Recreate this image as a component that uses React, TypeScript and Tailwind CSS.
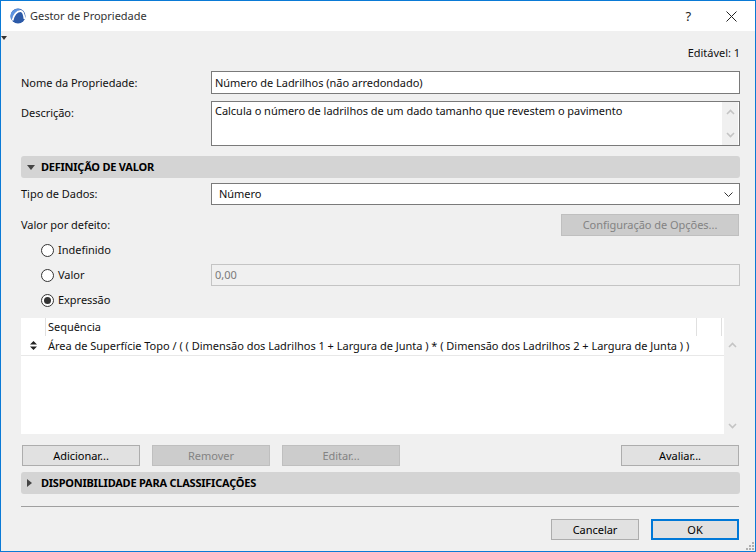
import React from 'react';

// Dialog "Gestor de Propriedade"

function Arrow({ up }: { up?: boolean }) {
  return (
    <svg width="9" height="6" viewBox="0 0 9 6" fill="none" stroke="#c4c4c4" strokeWidth="1.6">
      <path d={up ? 'M1 5l3.5-3.5L8 5' : 'M1 1l3.5 3.5L8 1'} />
    </svg>
  );
}

function Btn({ label, width, disabled, primary }: { label: string; width: string; disabled?: boolean; primary?: boolean }) {
  const look = disabled
    ? 'bg-[#cccccc] border-[#bfbfbf] text-[#838383]'
    : primary
    ? 'bg-[#e1e1e1] border-2 border-[#0078d7] text-black'
    : 'bg-[#e1e1e1] border-[#adadad] text-black';
  return <div className={`h-[21px] flex items-center justify-center border ${look} ${width}`}>{label}</div>;
}

function Radio({ label, checked, className }: { label: string; checked?: boolean; className?: string }) {
  return (
    <div className={`flex items-center gap-[4px] h-[14px] ${className ?? ''}`}>
      <div className="w-[13px] h-[13px] rounded-full border border-[#333333] bg-white flex items-center justify-center">
        {checked && <div className="w-[7px] h-[7px] rounded-full bg-[#333333]" />}
      </div>
      <span>{label}</span>
    </div>
  );
}

function Section({ label, open, className }: { label: string; open?: boolean; className?: string }) {
  return (
    <div className={`h-[22px] rounded-[3px] bg-[#d4d4d4] flex items-center font-bold text-black tracking-[-0.23px] ${className ?? ''}`}>
      <div className="w-[20px] flex justify-center">
        {open ? (
          <svg width="8" height="5" viewBox="0 0 8 5"><path d="M0 0h8L4 5z" fill="#444444" /></svg>
        ) : (
          <svg width="5" height="8" viewBox="0 0 5 8" className="ml-[-3px]"><path d="M0 0v8l5-4z" fill="#444444" /></svg>
        )}
      </div>
      <span>{label}</span>
    </div>
  );
}

export default function App() {
  return (
    <div className="relative w-[756px] h-[552px] flex flex-col border border-[#0a7ad6] bg-[#f0f0f0] text-[11px] leading-[14px] text-[#111111] tracking-[-0.03px] font-['Noto_Sans',sans-serif] overflow-hidden">
      {/* Title bar */}
      <div className="h-[30px] bg-white flex items-center shrink-0">
        <svg width="16" height="16" viewBox="0 0 16 16" className="ml-[9px]">
          <circle cx="8" cy="8" r="7.500" fill="#2c5aa8" />
          <path d="M.5 8a7.500 7.500 0 0 1 11-6.500C7 2 3 6 1.500 12 .8 11 .5 9.500.5 8z" fill="#5c93e0" />
          <path d="M2.500 12.500C3.500 7 7 3 10.500 3 13 3 14 6 14.500 11" fill="none" stroke="#ffffff" strokeWidth="1.800" />
        </svg>
        <span className="ml-[4px] text-[#333333]">Gestor de Propriedade</span>
        <span className="ml-auto text-[13px] text-[#222222] mr-[35px]">?</span>
        <svg width="11" height="11" viewBox="0 0 11 11" className="mr-[18px]" stroke="#222222" strokeWidth="1">
          <path d="M.5.5l10 10M10.500.5l-10 10" />
        </svg>
      </div>

      {/* Marker on the left edge */}
      <svg width="6" height="4" viewBox="0 0 6 4" className="absolute left-[0px] top-[35px]"><path d="M0 0h6L3 4z" fill="#333333" /></svg>

      <div className="flex-1 flex flex-col pl-[20px] pr-[15px]">
        <div className="h-[14px] mt-[15px] text-right">Editável: 1</div>

        {/* Name */}
        <div className="flex items-center mt-[11px]">
          <div className="w-[190px]">Nome da Propriedade:</div>
          <div className="flex-1 h-[23px] border border-[#7a7a7a] bg-white flex items-center px-[3px]">Número de Ladrilhos (não arredondado)</div>
        </div>

        {/* Description */}
        <div className="flex mt-[7px]">
          <div className="w-[190px] pt-[5px]">Descrição:</div>
          <div className="flex-1 h-[45px] border border-[#7a7a7a] bg-white flex pl-[3px]">
            <div className="flex-1 pt-[2px]">Calcula o número de ladrilhos de um dado tamanho que revestem o pavimento</div>
            <div className="w-[16px] mr-[1px] bg-[#f0f0f0] flex flex-col items-center justify-between py-[7px]">
              <Arrow up />
              <Arrow />
            </div>
          </div>
        </div>

        <Section label="DEFINIÇÃO DE VALOR" open className="mt-[10px]" />

        {/* Data type */}
        <div className="flex items-center mt-[5px]">
          <div className="w-[190px]">Tipo de Dados:</div>
          <div className="flex-1 h-[22px] border border-[#7a7a7a] bg-white flex items-center pl-[7px] pr-[6px] justify-between">
            <span>Número</span>
            <svg width="9" height="5" viewBox="0 0 9 5" fill="none" stroke="#333333"><path d="M.5.5l4 4 4-4" /></svg>
          </div>
        </div>

        {/* Default value */}
        <div className="flex items-center justify-between mt-[9px] pr-[1px]">
          <span>Valor por defeito:</span>
          <Btn label="Configuração de Opções..." width="w-[178px] h-[22px]" disabled />
        </div>

        <Radio label="Indefinido" className="ml-[20px] mt-[7px]" />
        <div className="flex items-center mt-[7px]">
          <Radio label="Valor" className="ml-[20px] w-[170px]" />
          <div className="flex-1 h-[22px] border border-[#c4c4c4] bg-[#f0f0f0] text-[#7a7a7a] flex items-center px-[3px]">0,00</div>
        </div>
        <Radio label="Expressão" checked className="ml-[20px] mt-[7px]" />

        {/* Sequence table */}
        <div className="flex mt-[11px] h-[116px]">
          <div className="w-[703px] bg-white flex flex-col">
            <div className="h-[18px] flex shrink-0">
              <div className="w-[25px] border-r border-[#e0e0e0]" />
              <div className="w-[651px] pl-[2px] border-r border-[#e0e0e0] flex items-center">Sequência</div>
              <div className="w-[25px] border-r border-[#e0e0e0]" />
            </div>
            <div className="h-[20px] flex items-center border-b border-[#e8e8e8] shrink-0">
              <div className="w-[24px] flex justify-center">
                <svg width="7" height="9" viewBox="0 0 7 9"><path d="M3.500 0L7 3.500H0zM3.500 9L0 5.500h7z" fill="#222222" /></svg>
              </div>
              <span className="pl-[3px] whitespace-nowrap tracking-[-0.015px]">Área de Superfície Topo / ( ( Dimensão dos Ladrilhos 1 + Largura de Junta ) * ( Dimensão dos Ladrilhos 2 + Largura de Junta ) )</span>
            </div>
          </div>
          <div className="w-[16px] flex flex-col items-center justify-between pt-[24px] pb-[5px]">
            <Arrow up />
            <Arrow />
          </div>
        </div>

        {/* Row actions */}
        <div className="flex mt-[11px] px-[1px]">
          <Btn label="Adicionar..." width="w-[118px]" />
          <Btn label="Remover" width="w-[118px] ml-[12px]" disabled />
          <Btn label="Editar..." width="w-[118px] ml-[12px]" disabled />
          <Btn label="Avaliar..." width="w-[118px] ml-auto" />
        </div>

        <Section label="DISPONIBILIDADE PARA CLASSIFICAÇÕES" className="mt-[6px]" />

        <div className="h-px bg-[#a0a0a0] mt-[12px] mr-[1px]" />

        <div className="flex justify-end gap-[12px] mt-[12px] pr-[1px]">
          <Btn label="Cancelar" width="w-[88px]" />
          <Btn label="OK" width="w-[88px]" primary />
        </div>
      </div>

      {/* Resize grip */}
      <svg width="8" height="8" viewBox="0 0 8 8" className="absolute right-[1px] bottom-[1px]" fill="#b0b0b0">
        <rect x="6" y="0" width="2" height="2" />
        <rect x="3" y="3" width="2" height="2" />
        <rect x="6" y="3" width="2" height="2" />
        <rect x="0" y="6" width="2" height="2" />
        <rect x="3" y="6" width="2" height="2" />
        <rect x="6" y="6" width="2" height="2" />
      </svg>
    </div>
  );
}
